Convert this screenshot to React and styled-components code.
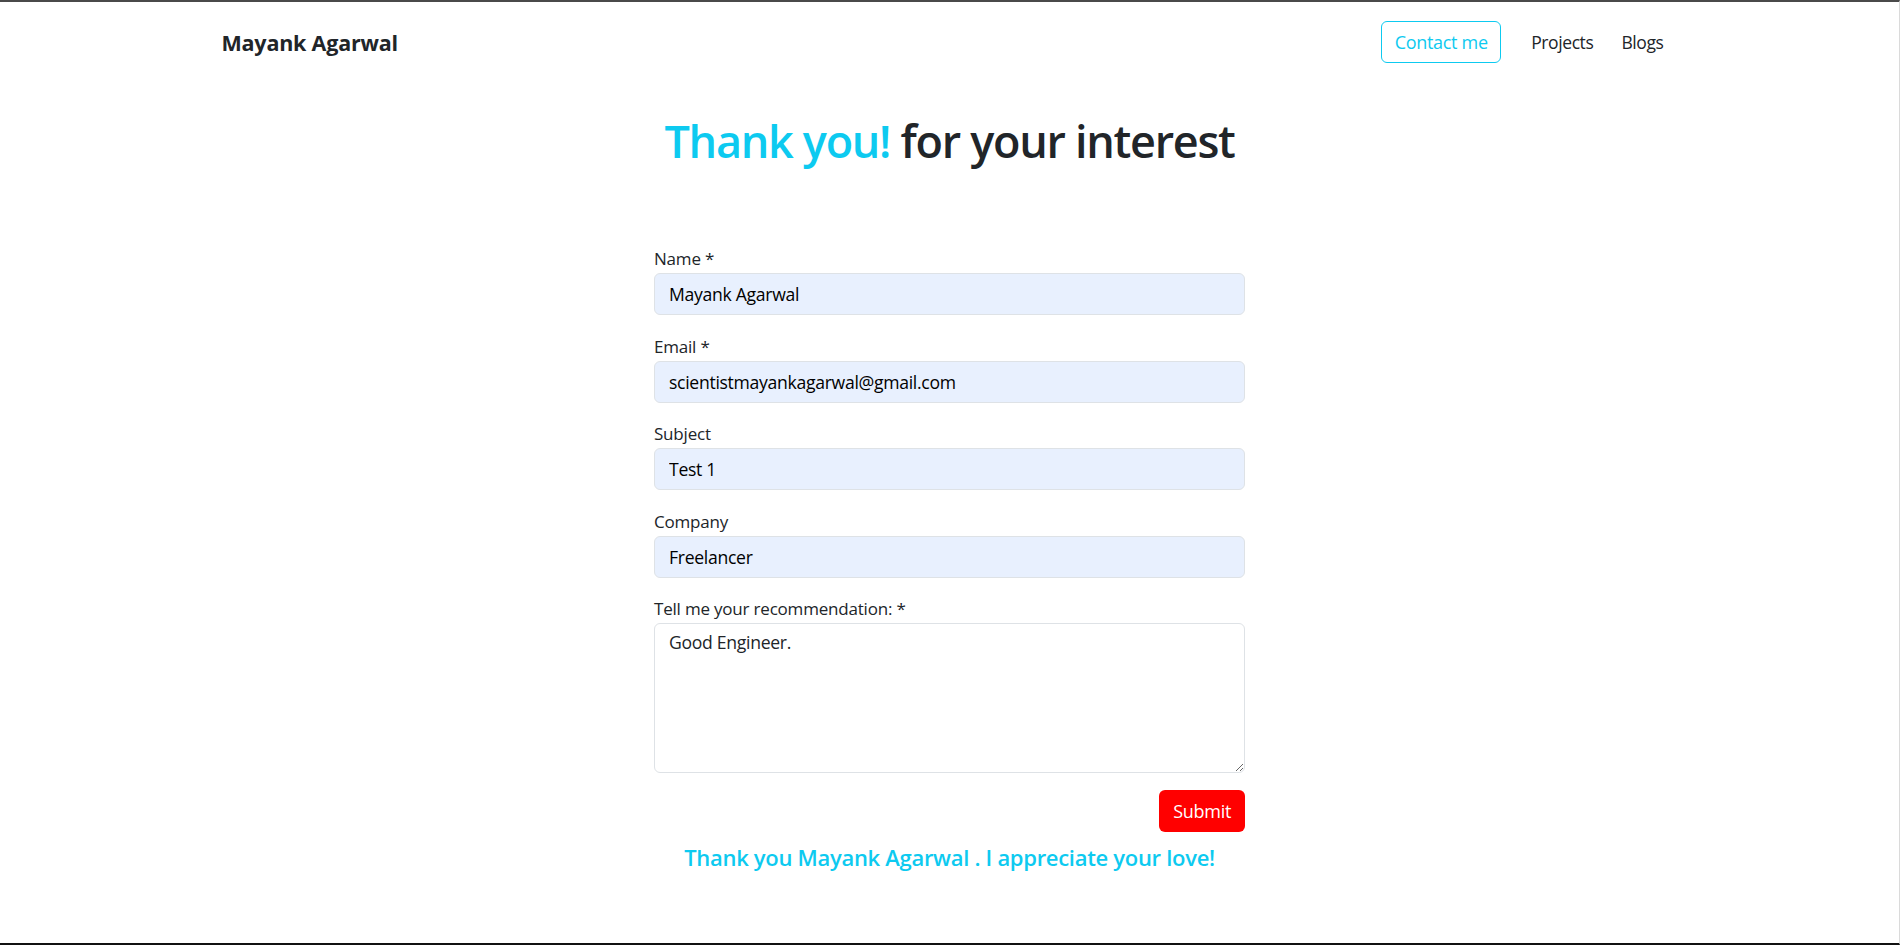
import React from 'react';
import styled, { createGlobalStyle } from 'styled-components';

const GlobalStyle = createGlobalStyle`
  * {
    box-sizing: border-box;
  }
  body {
    margin: 0;
    background: #ffffff;
    color: #212529;
    font-family: 'Open Sans', 'Noto Sans', sans-serif;
  }
`;

const info = '#0dcaf0';
const dark = '#212529';

const Page = styled.div`
  height: 945px;
  display: flex;
  flex-direction: column;
  border-top: 2px solid #4a4a4a;
  border-bottom: 2px solid #111111;
  border-right: 1px solid #dadada;
  overflow: hidden;
`;

const Navbar = styled.nav`
  width: 1456px;
  margin: 0 auto;
  padding-top: 19px;
  display: flex;
  align-items: center;
  justify-content: space-between;
`;

const Brand = styled.a`
  font-size: 21.5px;
  font-weight: 700;
  color: ${dark};
  text-decoration: none;
  letter-spacing: -0.2px;
`;

const NavList = styled.ul`
  display: flex;
  align-items: center;
  list-style: none;
  margin: 0;
  padding: 0;
`;

const ContactButton = styled.button`
  height: 42px;
  width: 120px;
  margin-right: 16px;
  border: 1px solid ${info};
  border-radius: 6px;
  background: transparent;
  color: ${info};
  font-family: inherit;
  font-size: 18px;
  letter-spacing: -0.3px;
`;

const NavLink = styled.a`
  padding: 0 14px;
  font-size: 17.5px;
  color: ${dark};
  text-decoration: none;
  letter-spacing: -0.4px;
`;

const Title = styled.h1`
  margin: 50px 0 0;
  text-align: center;
  font-size: 45px;
  line-height: 55px;
  font-weight: 600;
  letter-spacing: -1.3px;
  color: ${dark};
`;

const Accent = styled.span`
  color: ${info};
`;

const Form = styled.form`
  width: 591px;
  margin: 79px auto 0;
  display: flex;
  flex-direction: column;
`;

const Field = styled.div`
  display: flex;
  flex-direction: column;
  margin-bottom: 19.6px;
`;

const Label = styled.label`
  font-size: 17px;
  line-height: 24px;
  margin-bottom: 2px;
  color: ${dark};
  letter-spacing: -0.2px;
`;

const Input = styled.input`
  height: 42px;
  padding: 0 14px;
  border: 1px solid #dee2e6;
  border-radius: 6px;
  background: #e8f0fe;
  color: #000000;
  font-family: inherit;
  font-size: 17.6px;
  letter-spacing: -0.3px;
  outline: none;
`;

const TextArea = styled.textarea`
  height: 150px;
  padding: 4px 14px;
  border: 1px solid #dee2e6;
  border-radius: 6px;
  background: #ffffff;
  color: ${dark};
  font-family: inherit;
  font-size: 17.6px;
  line-height: 28px;
  letter-spacing: -0.3px;
  outline: none;
`;

const Actions = styled.div`
  display: flex;
  justify-content: flex-end;
  margin-top: -2.5px;
`;

const SubmitButton = styled.button`
  height: 42px;
  padding: 0 14px;
  border: none;
  border-radius: 6px;
  background: #ff0000;
  color: #ffffff;
  font-family: inherit;
  font-size: 18px;
  letter-spacing: -0.3px;
`;

const Message = styled.h5`
  margin: 10px 0 0;
  text-align: center;
  font-size: 22px;
  line-height: 30px;
  font-weight: 600;
  color: ${info};
  letter-spacing: -0.3px;
`;

const fields = [
  { label: 'Name *', value: 'Mayank Agarwal' },
  { label: 'Email *', value: 'scientistmayankagarwal@gmail.com' },
  { label: 'Subject', value: 'Test 1' },
  { label: 'Company', value: 'Freelancer' },
];

const App = () => {
  return (
    <Page>
      <GlobalStyle />
      <Navbar>
        <Brand href="#">Mayank Agarwal</Brand>
        <NavList>
          <li>
            <ContactButton type="button">Contact me</ContactButton>
          </li>
          <li>
            <NavLink href="#">Projects</NavLink>
          </li>
          <li>
            <NavLink href="#">Blogs</NavLink>
          </li>
        </NavList>
      </Navbar>
      <Title>
        <Accent>Thank you!</Accent> for your interest
      </Title>
      <Form onSubmit={(e) => e.preventDefault()}>
        {fields.map((f) => (
          <Field key={f.label}>
            <Label>{f.label}</Label>
            <Input value={f.value} readOnly />
          </Field>
        ))}
        <Field>
          <Label>Tell me your recommendation: *</Label>
          <TextArea value="Good Engineer." readOnly />
        </Field>
        <Actions>
          <SubmitButton type="submit">Submit</SubmitButton>
        </Actions>
        <Message>Thank you Mayank Agarwal . I appreciate your love!</Message>
      </Form>
    </Page>
  );
};

export default App;
